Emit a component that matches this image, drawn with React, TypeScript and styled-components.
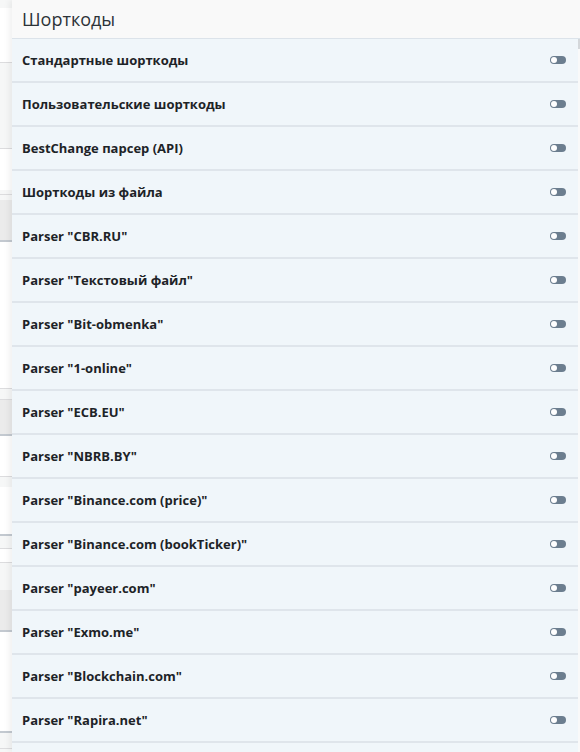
import styled, { createGlobalStyle } from 'styled-components'

const GlobalStyle = createGlobalStyle`
    html, body {
        margin: 0;
        padding: 0;
        height: 752px;
        overflow: hidden;
        background: #f0f0f1;
    }
`

const shortcodes = [
    'Стандартные шорткоды',
    'Пользовательские шорткоды',
    'BestChange парсер (API)',
    'Шорткоды из файла',
    'Parser "CBR.RU"',
    'Parser "Текстовый файл"',
    'Parser "Bit-obmenka"',
    'Parser "1-online"',
    'Parser "ECB.EU"',
    'Parser "NBRB.BY"',
    'Parser "Binance.com (price)"',
    'Parser "Binance.com (bookTicker)"',
    'Parser "payeer.com"',
    'Parser "Exmo.me"',
    'Parser "Blockchain.com"',
    'Parser "Rapira.net"',
]

// strips of the admin page that peek out from behind the panel
const backdrop: { h: number; tone: 'white' | 'light' | 'grey' | 'line' | 'dark' }[] = [
    { h: 8, tone: 'light' },
    { h: 54, tone: 'white' },
    { h: 1, tone: 'line' },
    { h: 85, tone: 'light' },
    { h: 1, tone: 'line' },
    { h: 41, tone: 'white' },
    { h: 4, tone: 'light' },
    { h: 1, tone: 'line' },
    { h: 5, tone: 'light' },
    { h: 40, tone: 'grey' },
    { h: 2, tone: 'dark' },
    { h: 146, tone: 'white' },
    { h: 1, tone: 'line' },
    { h: 10, tone: 'light' },
    { h: 1, tone: 'line' },
    { h: 34, tone: 'grey' },
    { h: 2, tone: 'dark' },
    { h: 40, tone: 'white' },
    { h: 1, tone: 'line' },
    { h: 10, tone: 'light' },
    { h: 47, tone: 'white' },
    { h: 2, tone: 'dark' },
    { h: 12, tone: 'light' },
    { h: 1, tone: 'line' },
    { h: 13, tone: 'white' },
    { h: 1, tone: 'line' },
    { h: 27, tone: 'light' },
    { h: 40, tone: 'grey' },
    { h: 2, tone: 'dark' },
    { h: 99, tone: 'white' },
    { h: 2, tone: 'dark' },
    { h: 15, tone: 'light' },
    { h: 1, tone: 'line' },
    { h: 30, tone: 'light' },
]

const tones = {
    white: '#ffffff',
    light: '#f6f7f7',
    grey: '#ebebeb',
    line: '#dcdcde',
    dark: '#c3c9d0',
}

const App = () => {
    return (
        <>
            <GlobalStyle />
            <Screen>
                <Backdrop>
                    {backdrop.map((s, i) => (
                        <Strip key={i} $h={s.h} $color={tones[s.tone]} />
                    ))}
                </Backdrop>
                <Panel>
                    <Header>Шорткоды</Header>
                    <Body>
                        <List>
                            {shortcodes.map((name) => (
                                <Row key={name}>
                                    <Title>{name}</Title>
                                    <Toggle />
                                </Row>
                            ))}
                        </List>
                        <Scrollbar>
                            <Thumb />
                        </Scrollbar>
                    </Body>
                </Panel>
            </Screen>
        </>
    )
}

const Screen = styled.div`
    display: flex;
    width: 580px;
    height: 752px;
    overflow: hidden;
`

const Backdrop = styled.div`
    display: flex;
    flex-direction: column;
    width: 12px;
    flex-shrink: 0;
`

const Strip = styled.div<{ $h: number; $color: string }>`
    height: ${(p) => p.$h}px;
    flex-shrink: 0;
    background: ${(p) => p.$color};
`

const Panel = styled.div`
    flex: 1;
    display: flex;
    flex-direction: column;
    background: #f9f9f9;
    box-shadow: -3px 0 6px rgba(0, 0, 0, 0.06);
    position: relative;
    z-index: 1;
`

const Header = styled.div`
    height: 39px;
    flex-shrink: 0;
    box-sizing: border-box;
    padding: 7px 0 0 10px;
    border-bottom: 1px solid #dce3ea;
    font-family: 'Open Sans', sans-serif;
    font-size: 18px;
    color: #2c3338;
    line-height: 24px;
`

const Body = styled.div`
    flex: 1;
    display: flex;
    min-height: 0;
`

const List = styled.div`
    flex: 1;
    display: flex;
    flex-direction: column;
    background: #f0f6fa;
`

const Row = styled.div`
    height: 42px;
    flex-shrink: 0;
    display: flex;
    align-items: center;
    justify-content: space-between;
    padding: 0 12px 0 10px;
    background: #f0f6fa;
    border-bottom: 2px solid #dfe5eb;
`

const Title = styled.span`
    font-family: 'Open Sans', sans-serif;
    font-weight: 700;
    font-size: 13px;
    color: #1d2327;
`

const Toggle = styled.span`
    width: 16px;
    height: 8px;
    border-radius: 4px;
    background: #6c7e8f;
    display: flex;
    align-items: center;
    padding: 0 1px;
    box-sizing: border-box;

    &::before {
        content: '';
        width: 6px;
        height: 6px;
        border-radius: 50%;
        background: #ffffff;
    }
`

const Scrollbar = styled.div`
    width: 2px;
    flex-shrink: 0;
    background: #f9f9f9;
`

const Thumb = styled.div`
    height: 10px;
    background: #d4d7da;
`

export default App
